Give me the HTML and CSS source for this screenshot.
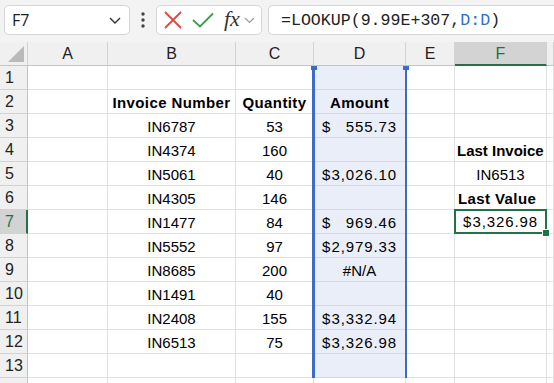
FILE: index.html
```html
<!DOCTYPE html>
<html lang="en">
<head>
<meta charset="UTF-8">
<link rel="stylesheet" href="styles.css">
<title>LOOKUP last value</title>
</head>
<body>
  <div class="toolbar">
    <div class="namebox">
      <span>F7</span>
      <svg class="chev" width="12" height="7" viewBox="0 0 12 7"><polyline points="1,1 6,6 11,1" fill="none" stroke="#333" stroke-width="1.4"/></svg>
    </div>
    <div class="dots">
      <svg width="6" height="16" viewBox="0 0 6 16"><circle cx="3" cy="2" r="1.7" fill="#444"/><circle cx="3" cy="8" r="1.7" fill="#444"/><circle cx="3" cy="14" r="1.7" fill="#444"/></svg>
    </div>
    <div class="fxbox">
      <svg width="18" height="18" viewBox="0 0 18 18"><path d="M1 1 L17 17 M17 1 L1 17" stroke="#e2463d" stroke-width="1.8" fill="none"/></svg>
      <svg width="22" height="16" viewBox="0 0 22 16"><polyline points="1,8 8,14.5 21,1.5" fill="none" stroke="#3c9b4c" stroke-width="1.8"/></svg>
      <span class="fx">fx</span>
      <svg width="11" height="7" viewBox="0 0 11 7"><polyline points="1,1 5.5,5.5 10,1" fill="none" stroke="#9a9a9a" stroke-width="1.2"/></svg>
    </div>
    <div class="formula">=LOOKUP(9.99E+307,<span class="ref">D:D</span>)</div>
  </div>

  <div class="sheet">
    <div class="row head">
      <div class="corner"><svg width="16" height="16" viewBox="0 0 16 16"><polygon points="16,0 16,16 0,16" fill="#b9b9b9"/></svg></div>
      <div class="ch">A</div><div class="ch">B</div><div class="ch">C</div><div class="ch">D</div><div class="ch">E</div><div class="ch active">F</div><div class="ch"></div>
    </div>
    <div class="row"><div class="rh">1</div><div></div><div></div><div></div><div class="d"></div><div></div><div></div><div></div></div>
    <div class="row"><div class="rh">2</div><div></div><div class="c b">Invoice Number</div><div class="c b">Quantity</div><div class="d c b">Amount</div><div></div><div></div><div></div></div>
    <div class="row"><div class="rh">3</div><div></div><div class="c">IN6787</div><div class="c">53</div><div class="d acc"><span>$</span><span>555.73</span></div><div></div><div></div><div></div></div>
    <div class="row"><div class="rh">4</div><div></div><div class="c">IN4374</div><div class="c">160</div><div class="d"></div><div></div><div class="l b wide">Last Invoice</div><div></div></div>
    <div class="row"><div class="rh">5</div><div></div><div class="c">IN5061</div><div class="c">40</div><div class="d acc"><span>$</span><span>3,026.10</span></div><div></div><div class="c">IN6513</div><div></div></div>
    <div class="row"><div class="rh">6</div><div></div><div class="c">IN4305</div><div class="c">146</div><div class="d"></div><div></div><div class="l b">Last Value</div><div></div></div>
    <div class="row"><div class="rh active">7</div><div></div><div class="c">IN1477</div><div class="c">84</div><div class="d acc"><span>$</span><span>969.46</span></div><div></div><div class="acc cur"><span>$</span><span>3,326.98</span></div><div></div></div>
    <div class="row"><div class="rh">8</div><div></div><div class="c">IN5552</div><div class="c">97</div><div class="d acc"><span>$</span><span>2,979.33</span></div><div></div><div></div><div></div></div>
    <div class="row"><div class="rh">9</div><div></div><div class="c">IN8685</div><div class="c">200</div><div class="d c">#N/A</div><div></div><div></div><div></div></div>
    <div class="row"><div class="rh">10</div><div></div><div class="c">IN1491</div><div class="c">40</div><div class="d"></div><div></div><div></div><div></div></div>
    <div class="row"><div class="rh">11</div><div></div><div class="c">IN2408</div><div class="c">155</div><div class="d acc"><span>$</span><span>3,332.94</span></div><div></div><div></div><div></div></div>
    <div class="row"><div class="rh">12</div><div></div><div class="c">IN6513</div><div class="c">75</div><div class="d acc"><span>$</span><span>3,326.98</span></div><div></div><div></div><div></div></div>
    <div class="row"><div class="rh">13</div><div></div><div></div><div></div><div class="d"></div><div></div><div></div><div></div></div>
    <div class="row"><div class="rh"></div><div></div><div></div><div></div><div></div><div></div><div></div><div></div></div>

    <!-- blue outline of the D:D reference -->
    <div class="refbox"><i class="hl"></i><i class="hr"></i></div>
  </div>
</body>
</html>
```

FILE: styles.css
```css
html, body {
  margin: 0;
  height: 100%;
  overflow: hidden;
  background: #fff;
}
body {
  font-family: "Liberation Sans", Arial, sans-serif;
  font-size: 15px;
  color: #000;
}

/* formula bar */
.toolbar {
  height: 42px;
  box-sizing: border-box;
  background: #f3f3f3;
  display: flex;
  align-items: flex-start;
  padding: 5px 0 0 4px;
}
.namebox, .fxbox, .formula {
  height: 30px;
  box-sizing: border-box;
  background: #fff;
  border: 1px solid #d6d6d6;
  border-radius: 5px;
  display: flex;
  align-items: center;
}
.namebox {
  width: 126px;
  padding: 0 8px 0 7px;
  justify-content: space-between;
  font-family: "Open Sans", "Liberation Sans", sans-serif;
  font-size: 16px;
  color: #222;
}
.dots {
  width: 26px;
  height: 30px;
  display: flex;
  align-items: center;
  justify-content: center;
}
.fxbox {
  width: 106px;
  padding: 0 0 0 7px;
  gap: 9px;
}
.fxbox svg:nth-child(2) { margin-left: 1px; }
.fx {
  font-family: "Liberation Serif", serif;
  font-style: italic;
  font-size: 22px;
  color: #333;
  margin: -3px -5px 0 1px;
}
.formula {
  flex: 1;
  margin-left: 6px;
  border-right: none;
  border-radius: 5px 0 0 5px;
  padding-left: 12px;
  font-family: "Liberation Mono", monospace;
  font-size: 16.6px;
  color: #222;
}
.ref { color: #2f6bc8; }

/* grid */
.sheet {
  position: relative;
}
.row {
  display: grid;
  grid-template-columns: 28px 80px 128px 78px 92px 49px 92px 1fr;
  height: 24px;
}
.row > div {
  box-sizing: border-box;
  border-right: 1px solid #e1e1e1;
  border-bottom: 1px solid #e1e1e1;
  display: flex;
  align-items: center;
  padding: 1px 3px 0;
  white-space: nowrap;
  overflow: hidden;
}
.head > div {
  background: #f0f0f0;
  border-right-color: #d2d2d2;
  border-bottom-color: #c4c4c4;
  justify-content: center;
  color: #222;
  font-size: 16px;
}
.head .corner {
  justify-content: flex-end;
  align-items: flex-end;
  padding: 0 3px 3px 0;
}
.head .active {
  background: #d3d3d3;
  color: #217346;
  border-bottom: 2px solid #217346;
}
.row > .rh {
  background: #f0f0f0;
  border-right-color: #c4c4c4;
  border-bottom-color: #d2d2d2;
  padding-left: 5px;
  font-size: 16px;
  color: #222;
}
.row > .rh.active {
  background: #d3d3d3;
  color: #217346;
  border-right: 2px solid #217346;
}
.row > .c { justify-content: center; }
.row > .l { padding-left: 3px; }
.b {
  font-weight: bold;
  letter-spacing: 0.4px;
}
.row > .wide {
  letter-spacing: 0;
  padding-left: 2px;
  overflow: visible;
}
.row > .d { background: #e9eef8; border-bottom-color: #d3d9e4; }
.row > .acc {
  justify-content: space-between;
  padding: 1px 8px 0 8px;
  letter-spacing: 0.9px;
}
.row > .cur {
  border: 2px solid #217346;
  margin: -1px 0 0 -1px;
  width: 93px;
  height: 25px;
  padding: 0 7px 0 7px;
  position: relative;
  overflow: visible;
}
.cur::after {
  content: "";
  position: absolute;
  right: -5px;
  bottom: -5px;
  width: 6px;
  height: 6px;
  background: #217346;
  border: 1px solid #fff;
}

.refbox {
  position: absolute;
  left: 312px;
  top: 24px;
  width: 95px;
  height: 312px;
  box-sizing: border-box;
  border-left: 3px solid #3a6cc8;
  border-right: 2px solid #3a6cc8;
  pointer-events: none;
}
.refbox i {
  position: absolute;
  top: 0;
  width: 6px;
  height: 4px;
  background: #3a6cc8;
}
.refbox .hl { left: -4px; }
.refbox .hr { right: -4px; }
```
